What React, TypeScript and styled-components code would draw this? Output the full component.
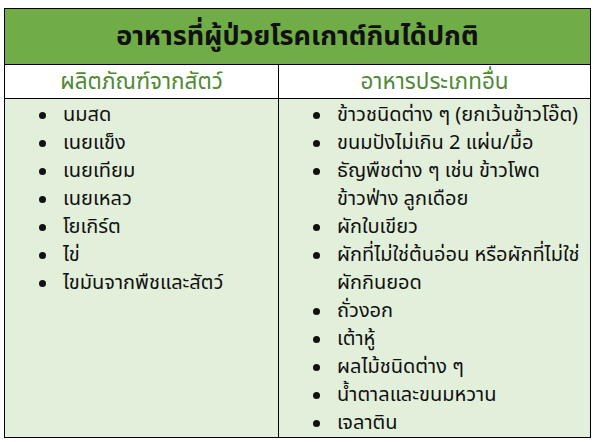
import React from "react";
import styled, { createGlobalStyle } from "styled-components";

const Global = createGlobalStyle`
  html, body { margin: 0; padding: 0; background: #fff; overflow: hidden; }
  body { font-family: "Noto Sans Thai", "Kanit", "Tahoma", "Noto Sans", "DejaVu Sans", sans-serif; }
`;

const Page = styled.div`
  width: 597px;
  height: 442px;
  padding: 8px 6px 0 4px;
  box-sizing: border-box;
  overflow: hidden;
`;

const Table = styled.div`
  width: 587px;
  height: 430px;
  border: 1.5px solid #000;
  box-sizing: border-box;
  display: grid;
  grid-template-columns: 274px 1fr;
  grid-template-rows: 56px 34px minmax(0, 1fr);
  overflow: hidden;
`;

const Title = styled.div`
  grid-column: 1 / 3;
  background: #70ad47;
  border-bottom: 1.5px solid #000;
  display: flex;
  align-items: center;
  justify-content: center;
  font-size: 27px;
  font-weight: 700;
  color: #111;
`;

const Head = styled.div<{ $left?: boolean }>`
  background: #fff;
  border-bottom: 1.5px solid #000;
  border-right: ${(p) => (p.$left ? "1.5px solid #000" : "none")};
  display: flex;
  align-items: center;
  justify-content: center;
  font-size: 22.5px;
  color: #4f8a35;
`;

const Cell = styled.div<{ $left?: boolean }>`
  background: #e2efda;
  border-right: ${(p) => (p.$left ? "1.5px solid #000" : "none")};
  padding: 2px 0 0 0;
`;

const List = styled.ul`
  list-style: none;
  margin: 0;
  padding: 0;
`;

const Item = styled.li`
  position: relative;
  padding-left: 58px;
  font-size: 20px;
  line-height: 28px;
  white-space: nowrap;
  color: #111;
  &::before {
    content: "";
    position: absolute;
    left: 34px;
    top: 11px;
    width: 7px;
    height: 7px;
    border-radius: 50%;
    background: #111;
  }
`;

const left: React.ReactNode[] = ["นมสด", "เนยแข็ง", "เนยเทียม", "เนยเหลว", "โยเกิร์ต", "ไข่", "ไขมันจากพืชและสัตว์"];
const right: React.ReactNode[] = [
  "ข้าวชนิดต่าง ๆ (ยกเว้นข้าวโอ๊ต)",
  "ขนมปังไม่เกิน 2 แผ่น/มื้อ",
  <>ธัญพืชต่าง ๆ เช่น ข้าวโพด<br />ข้าวฟ่าง ลูกเดือย</>,
  "ผักใบเขียว",
  <>ผักที่ไม่ใช่ต้นอ่อน หรือผักที่ไม่ใช่<br />ผักกินยอด</>,
  "ถั่วงอก",
  "เต้าหู้",
  "ผลไม้ชนิดต่าง ๆ",
  "น้ำตาลและขนมหวาน",
  "เจลาติน",
];

export default function App() {
  return (
    <Page>
      <Global />
      <Table>
        <Title>อาหารที่ผู้ป่วยโรคเกาต์กินได้ปกติ</Title>
        <Head $left>ผลิตภัณฑ์จากสัตว์</Head>
        <Head>อาหารประเภทอื่น</Head>
        <Cell $left>
          <List>
            {left.map((t, i) => (
              <Item key={i}>{t}</Item>
            ))}
          </List>
        </Cell>
        <Cell>
          <List>
            {right.map((t, i) => (
              <Item key={i}>{t}</Item>
            ))}
          </List>
        </Cell>
      </Table>
    </Page>
  );
}
